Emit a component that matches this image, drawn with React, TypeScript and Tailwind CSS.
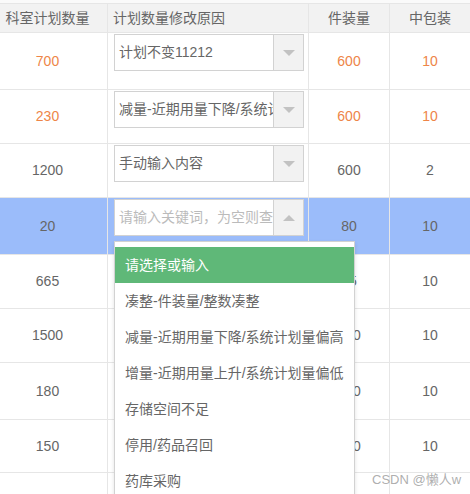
import React from "react";

type Row = {
	plan: string;
	reason: string;
	placeholder?: boolean;
	pack: string;
	mid: string;
	orange?: [boolean, boolean, boolean];
	h: string;
	active?: boolean;
};

const rows: Row[] = [
	{ plan: "700", reason: "计划不变11212", pack: "600", mid: "10", orange: [true, true, true], h: "h-[57px]" },
	{ plan: "230", reason: "减量-近期用量下降/系统计划量偏高", pack: "600", mid: "10", orange: [true, true, true], h: "h-[54px]" },
	{ plan: "1200", reason: "手动输入内容", pack: "600", mid: "2", h: "h-[54px]" },
	{ plan: "20", reason: "请输入关键词，为空则查询全部", placeholder: true, pack: "80", mid: "10", h: "h-[57px]", active: true },
	{ plan: "665", reason: "凑整-件装量/整数凑整", pack: "25", mid: "10", h: "h-[54px]" },
	{ plan: "1500", reason: "存储空间不足", pack: "600", mid: "10", h: "h-[54px]" },
	{ plan: "180", reason: "药库采购", pack: "600", mid: "10", h: "h-[57px]" },
	{ plan: "150", reason: "停用/药品召回", pack: "600", mid: "10", h: "h-[53px]" },
	{ plan: "300", reason: "计划不变", pack: "600", mid: "10", h: "h-[54px]" },
];

const options = [
	"请选择或输入",
	"凑整-件装量/整数凑整",
	"减量-近期用量下降/系统计划量偏高",
	"增量-近期用量上升/系统计划量偏低",
	"存储空间不足",
	"停用/药品召回",
	"药库采购",
	"其他",
];

function Arrow({ up }: { up?: boolean }) {
	return (
		<svg width="12" height="6" viewBox="0 0 12 6">
			{up ? <path d="M0 6 L6 0 L12 6 Z" fill="#c2c2c2" /> : <path d="M0 0 L12 0 L6 6 Z" fill="#c2c2c2" />}
		</svg>
	);
}

function Select({ row }: { row: Row }) {
	return (
		<div className="mt-px flex h-[37px] border border-[#d2d2d2] bg-white">
			<div
				className={
					"flex-1 min-w-0 overflow-hidden whitespace-nowrap pl-[4px] leading-[35px] " +
					(row.placeholder ? "text-[#bbbbbb]" : "text-[#666666]")
				}
			>
				{row.reason}
			</div>
			<div className="flex w-[30px] shrink-0 items-center justify-center border-l border-[#d2d2d2] bg-[#f2f2f2]">
				<Arrow up={row.active} />
			</div>
		</div>
	);
}

export default function App() {
	const orange = "text-[#ee8548]";
	return (
		<div
			className="relative h-[494px] w-[470px] overflow-hidden bg-white text-[14px] text-[#666666]"
			style={{ fontFamily: '"Liberation Sans", "Noto Sans CJK SC", sans-serif' }}
		>
			<div className="h-[4px] bg-[#fafafa] border-b border-[#e6e6e6]" />
			<div className="grid h-[29px] grid-cols-[108px_201px_81px_80px] border-b border-[#e6e6e6] bg-[#f2f2f2]">
				<div className="flex items-center justify-center border-r border-[#e6e6e6] pr-3">科室计划数量</div>
				<div className="flex items-center border-r border-[#e6e6e6] pl-[5px]">计划数量修改原因</div>
				<div className="flex items-center justify-center border-r border-[#e6e6e6]">件装量</div>
				<div className="flex items-center justify-center">中包装</div>
			</div>
			{rows.map((row, i) => (
				<div
					key={i}
					className={
						"grid grid-cols-[108px_201px_81px_80px] border-b border-[#e6e6e6] " +
						row.h +
						(row.active ? " bg-[#9bbcfa]" : "")
					}
				>
					<div className={"flex items-center justify-center border-r border-[#e6e6e6] pr-3 " + (row.orange?.[0] ? orange : "")}>
						{row.plan}
					</div>
					<div className="relative border-r border-[#e6e6e6] pl-[6px] pr-[4px]">
						<Select row={row} />
						{row.active && (
							<div className="absolute left-[6px] top-[43px] z-10 w-[241px] border border-[#d2d2d2] bg-white pt-[5px] shadow-[0_2px_4px_rgba(0,0,0,0.12)]">
								{options.map((o, j) => (
									<div
										key={o}
										className={
											"h-[36px] whitespace-nowrap pl-[10px] leading-[36px] " +
											(j === 0 ? "bg-[#5fb878] text-white" : "text-[#666666]")
										}
									>
										{o}
									</div>
								))}
							</div>
						)}
					</div>
					<div className={"flex items-center justify-center border-r border-[#e6e6e6] " + (row.orange?.[1] ? orange : "")}>
						{row.pack}
					</div>
					<div className={"flex items-center justify-center " + (row.orange?.[2] ? orange : "")}>{row.mid}</div>
				</div>
			))}
			<div className="pointer-events-none absolute left-[372px] top-[470px] text-[13px] text-[#999999]/80">CSDN @懒人w</div>
		</div>
	);
}
